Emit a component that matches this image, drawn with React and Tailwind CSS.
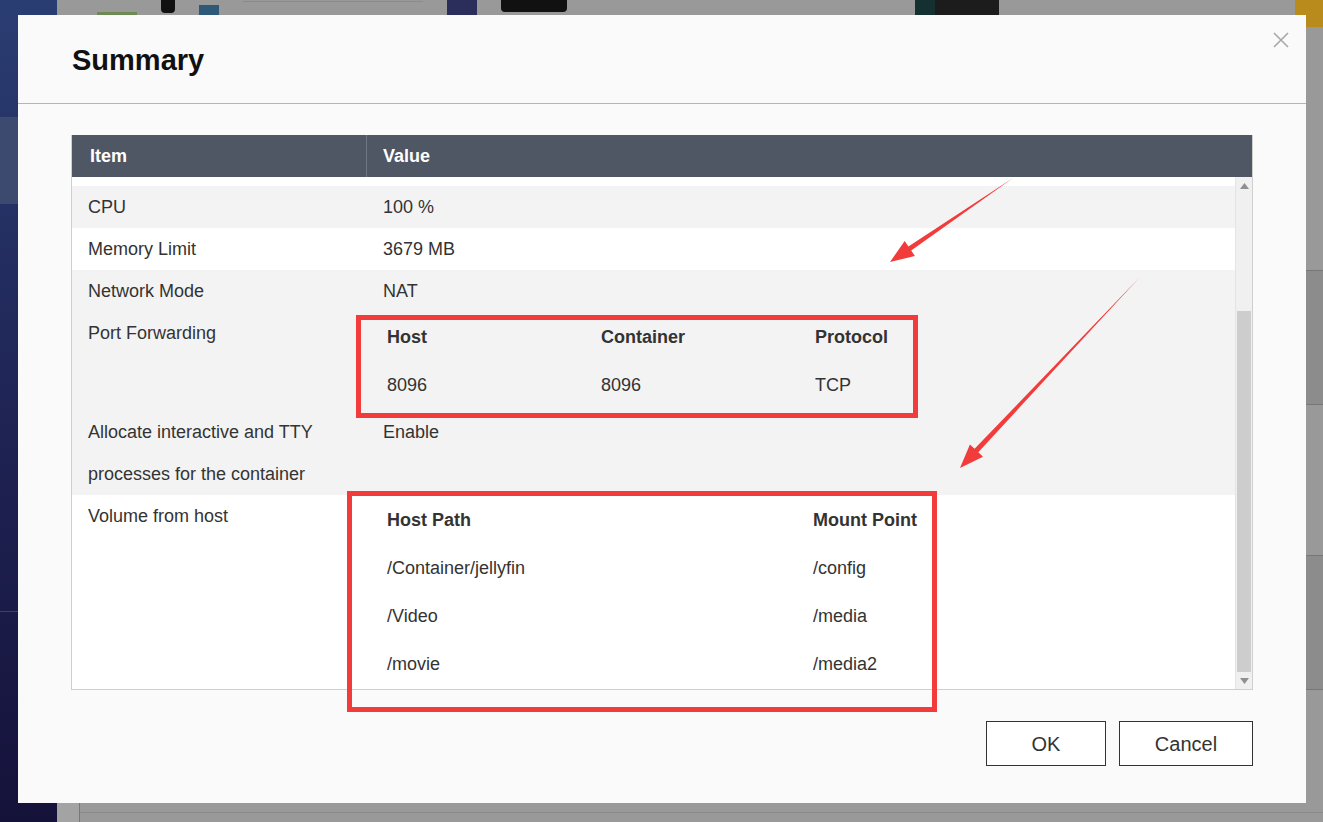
import React from "react";

const rows = [
  { label: "CPU", value: "100 %", bg: "bg-[#f3f3f3]" },
  { label: "Memory Limit", value: "3679 MB", bg: "bg-white" },
  { label: "Network Mode", value: "NAT", bg: "bg-[#f3f3f3]" },
];

const volumes = [
  ["/Container/jellyfin", "/config"],
  ["/Video", "/media"],
  ["/movie", "/media2"],
];

function Arrow({ a, b }) {
  // tapering red annotation arrow from tail a to tip b
  const dx = b[0] - a[0];
  const dy = b[1] - a[1];
  const len = Math.hypot(dx, dy);
  const ux = dx / len;
  const uy = dy / len;
  const nx = -uy;
  const ny = ux;
  const hx = b[0] - 24 * ux;
  const hy = b[1] - 24 * uy;
  const p = (x, y) => `${x.toFixed(1)},${y.toFixed(1)}`;
  const pts = [
    p(a[0], a[1]),
    p(hx + 2.5 * nx, hy + 2.5 * ny),
    p(hx + 9 * nx, hy + 9 * ny),
    p(b[0], b[1]),
    p(hx - 9 * nx, hy - 9 * ny),
    p(hx - 2.5 * nx, hy - 2.5 * ny),
  ].join(" ");
  return <polygon points={pts} fill="#f23b3b" />;
}

export default function App() {
  return (
    <div className="relative w-[1323px] h-[822px] overflow-hidden font-['Liberation_Sans',Arial,sans-serif] bg-[#999999]">
      {/* dimmed app behind the dialog */}
      <div className="flex h-full">
        <div className="w-[57px] h-full bg-gradient-to-b from-[#2a3d72] via-[#1f2455] to-[#15123a] flex flex-col">
          <div className="h-[118px] border-b border-[#3a4a7a]" />
          <div className="h-[86px] bg-[#3d4a70]" />
          <div className="h-[408px] border-b border-[#3a4070]" />
        </div>
        <div className="flex-1 flex flex-col">
          <div className="h-[15px] flex items-start gap-6 pl-[40px]">
            <div className="w-[40px] h-[3px] mt-[12px] bg-[#6d8a55]" />
            <div className="w-[14px] h-[13px] bg-[#111] rounded-b" />
            <div className="w-[20px] h-[10px] mt-[5px] bg-[#2d5878]" />
            <div className="w-[180px] h-px mt-[1px] bg-[#7a8ea8]" />
            <div className="w-[30px] h-[15px] bg-[#2b2e5a]" />
            <div className="w-[66px] h-[12px] bg-[#111] rounded-b" />
            <div className="w-[300px]" />
            <div className="w-[20px] h-[15px] bg-[#143030]" />
            <div className="w-[64px] h-[15px] bg-[#1c1c1c] -ml-6" />
          </div>
          <div className="flex-1" />
          <div className="h-[19px] flex">
            <div className="w-[23px] bg-[#a3a3a3] border-r border-[#777]" />
            <div className="flex-1 border-t border-[#8a8a8a] mt-[9px]" />
          </div>
        </div>
      </div>
      <div className="absolute right-0 top-0 w-[28px] h-[27px] bg-[#b98a1c] rounded-bl" />
      <div className="absolute right-0 top-[270px] w-[17px] h-[135px] bg-[#8c8c8c] border-y border-[#777]" />
      <div className="absolute right-0 top-[555px] w-[17px] h-[135px] bg-[#8c8c8c] border-y border-[#777]" />

      {/* dialog */}
      <div className="absolute left-[18px] top-[15px] w-[1288px] h-[788px] bg-[#fafafa] flex flex-col">
        <div className="h-[89px] flex items-center justify-between pl-[54px] pr-[16px] border-b border-[#b5b5b5]">
          <h1 className="text-[29px] font-bold text-[#111] mt-[3px]">Summary</h1>
          <svg width="18" height="18" viewBox="0 0 18 18" className="-mt-[39px]">
            <path d="M2 2 L16 16 M16 2 L2 16" stroke="#a8a8a8" strokeWidth="1.6" />
          </svg>
        </div>

        <div className="pt-[31px] px-[53px] flex flex-col">
          <div className="h-[555px] flex flex-col border border-[#cfcfcf] border-t-0">
            <div className="h-[42px] flex bg-[#4f5664] text-white font-bold text-[18px]">
              <div className="w-[295px] pl-[18px] flex items-center border-r border-[#6e7583]">Item</div>
              <div className="flex-1 pl-[16px] flex items-center">Value</div>
            </div>
            <div className="flex-1 flex min-h-0">
              <div className="flex-1 bg-white pt-[9px] overflow-hidden text-[18px] text-[#333]">
                {rows.map((r) => (
                  <div key={r.label} className={`h-[42px] flex items-center ${r.bg}`}>
                    <div className="w-[294px] pl-[16px]">{r.label}</div>
                    <div className="pl-[17px]">{r.value}</div>
                  </div>
                ))}
                <div className="h-[99px] flex bg-[#f3f3f3]">
                  <div className="w-[294px] pl-[16px] leading-[42px]">Port Forwarding</div>
                  <div className="pl-[17px] pt-[1px] flex flex-col">
                    <div className="h-[48px] flex items-center font-bold">
                      <div className="w-[214px] pl-[4px]">Host</div>
                      <div className="w-[214px] pl-[4px]">Container</div>
                      <div className="w-[214px] pl-[4px]">Protocol</div>
                    </div>
                    <div className="h-[48px] flex items-center">
                      <div className="w-[214px] pl-[4px]">8096</div>
                      <div className="w-[214px] pl-[4px]">8096</div>
                      <div className="w-[214px] pl-[4px]">TCP</div>
                    </div>
                  </div>
                </div>
                <div className="h-[84px] flex bg-[#f3f3f3] leading-[42px]">
                  <div className="w-[294px] pl-[16px]">
                    Allocate interactive and TTY
                    <br />
                    processes for the container
                  </div>
                  <div className="pl-[17px]">Enable</div>
                </div>
                <div className="flex bg-white">
                  <div className="w-[294px] pl-[16px] leading-[42px]">Volume from host</div>
                  <div className="pl-[17px] pt-[1px] flex flex-col">
                    <div className="h-[48px] flex items-center font-bold">
                      <div className="w-[426px] pl-[4px]">Host Path</div>
                      <div className="w-[200px] pl-[4px]">Mount Point</div>
                    </div>
                    {volumes.map(([h, m]) => (
                      <div key={h} className="h-[48px] flex items-center">
                        <div className="w-[426px] pl-[4px]">{h}</div>
                        <div className="w-[200px] pl-[4px]">{m}</div>
                      </div>
                    ))}
                  </div>
                </div>
              </div>
              {/* scrollbar */}
              <div className="w-[17px] bg-[#f0f0f0] border-l border-[#e4e4e4] flex flex-col">
                <div className="h-[17px] flex items-center justify-center">
                  <svg width="9" height="6" viewBox="0 0 9 6"><path d="M4.5 0 L9 6 L0 6 Z" fill="#8f8f8f" /></svg>
                </div>
                <div className="h-[117px]" />
                <div className="flex-1 bg-[#cdcdcd] mx-[1px]" />
                <div className="h-[17px] flex items-center justify-center">
                  <svg width="9" height="6" viewBox="0 0 9 6"><path d="M0 0 L9 0 L4.5 6 Z" fill="#8f8f8f" /></svg>
                </div>
              </div>
            </div>
          </div>

          <div className="flex justify-end gap-[13px] mt-[31px]">
            <button className="w-[120px] h-[45px] border border-[#333] bg-white text-[20px] text-[#333]">OK</button>
            <button className="w-[134px] h-[45px] border border-[#333] bg-white text-[20px] text-[#333]">Cancel</button>
          </div>
        </div>
      </div>

      {/* red annotations over the dialog */}
      <div className="absolute left-[356px] top-[315px] w-[562px] h-[103px] border-[5px] border-[#f23b3b]" />
      <div className="absolute left-[347px] top-[491px] w-[590px] h-[221px] border-[5px] border-[#f23b3b]" />
      <svg className="absolute left-0 top-0 pointer-events-none" width="1323" height="822">
        <Arrow a={[1013, 178]} b={[890, 262]} />
        <Arrow a={[1140, 277]} b={[960, 468]} />
      </svg>
    </div>
  );
}
